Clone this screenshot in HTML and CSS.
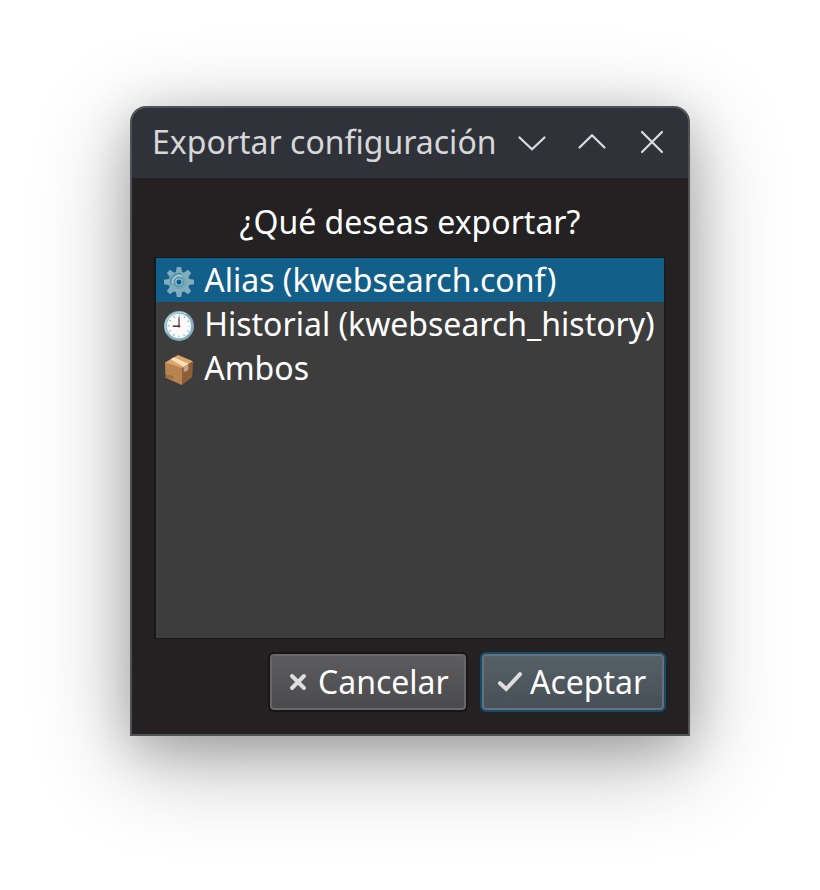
FILE: index.html
```html
<!DOCTYPE html>
<html lang="es">
<head>
<meta charset="utf-8">
<title>Exportar configuración</title>
<link rel="stylesheet" href="styles.css">
</head>
<body>
<main class="window">
  <header class="titlebar">
    <h1 class="title">Exportar configuración</h1>
    <div class="controls">
      <svg class="control" viewBox="0 0 36 36"><path d="M5.5 13.5 18 25.2 30.5 13.5"/></svg>
      <svg class="control" viewBox="0 0 36 36"><path d="M5.5 23.5 18 11.2 30.5 23.5"/></svg>
      <svg class="control" viewBox="0 0 36 36"><path d="M8 8 28 28M28 8 8 28"/></svg>
    </div>
  </header>
  <section class="content">
    <p class="question">¿Qué deseas exportar?</p>
    <ul class="list">
      <li class="row selected">
        <svg class="emoji" viewBox="0 0 30 30">
          <g fill="#82adbd">
            <g id="teeth">
              <path id="tooth" d="M11.8 6 12.8 0h4.4l1 6z"/>
              <use href="#tooth" transform="rotate(45 15 15)"/>
              <use href="#tooth" transform="rotate(90 15 15)"/>
              <use href="#tooth" transform="rotate(135 15 15)"/>
            </g>
            <use href="#teeth" transform="rotate(180 15 15)"/>
            <circle cx="15" cy="15" r="10.6"/>
          </g>
          <circle cx="15" cy="15" r="7.2" fill="#6fa5b8"/>
          <path d="M7.1 18A8.5 8.5 0 0 1 18 7" fill="none" stroke="#438da8" stroke-width="1.2"/>
          <path d="M9 16.5a6.2 6.2 0 0 1 9-7" fill="none" stroke="#a9cad5" stroke-width="1.3"/>
          <circle cx="15" cy="15" r="4.6" fill="#3b7f9c"/>
          <circle cx="15" cy="15" r="3.2" fill="#105f8a" stroke="#9cc3d0" stroke-width="1.3"/>
        </svg>
        <span>Alias (kwebsearch.conf)</span>
      </li>
      <li class="row">
        <svg class="emoji" viewBox="0 0 30 30">
          <circle cx="15" cy="15" r="15" fill="#82aebf"/>
          <path d="M3 22A14 14 0 0 1 22 3" fill="none" stroke="#a5d0df" stroke-width="1.5"/>
          <circle cx="15" cy="15" r="12.2" fill="#fafafa"/>
          <circle cx="15" cy="15" r="10.3" fill="none" stroke="#7ba5b5" stroke-width="1.8" stroke-dasharray="1 4.393" stroke-dashoffset=".5"/>
          <path d="M15 15.5V6.2" stroke="#5c4545" stroke-width="1.3"/>
          <path d="M15.5 15.2H8.8" stroke="#493033" stroke-width="1.5"/>
          <circle cx="15" cy="15.2" r="1.3" fill="#783638"/>
        </svg>
        <span>Historial (kwebsearch_history)</span>
      </li>
      <li class="row">
        <svg class="emoji" viewBox="0 0 30 30">
          <path d="M1 7.5 18 13v17L1.5 22.7z" fill="#b7834f"/>
          <path d="M18 13 29 6.5 28.3 22 18 30z" fill="#8f5e38"/>
          <path d="M1 7.5 14 0l15 6.3L18 13.2z" fill="#dda66b"/>
          <path d="M6.6 4.2 10 2.3 24.4 8.8 19.7 11.8z" fill="#fae0b7"/>
          <path d="m19.7 11.8 4.7-3v5.8L21.6 17l-1.9-.7z" fill="#c3a38b"/>
          <path d="M1 7.5 18 13" fill="none" stroke="#c99359" stroke-width=".7"/>
          <path d="M2.6 19.3v2.6l1.6.7v-2.4M6 23.2v-2.4M5.2 20.6l1.7.7M8 24v-2.4M7.3 21.4l1.6.7" fill="none" stroke="#765334" stroke-width=".6"/>
        </svg>
        <span>Ambos</span>
      </li>
    </ul>
    <div class="actions">
      <button class="button cancel">
        <svg class="icon" viewBox="0 0 32 32"><path d="M10 10 22 22M22 10 10 22"/></svg>
        <span>Cancelar</span>
      </button>
      <button class="button accept">
        <svg class="icon" viewBox="0 0 32 32"><path d="M6 17.2 12.2 23 26 8.2"/></svg>
        <span>Aceptar</span>
      </button>
    </div>
  </section>
</main>
</body>
</html>
```
FILE: styles.css
```css
* { box-sizing: border-box; }
body {
  margin: 0;
  height: 890px;
  padding: 106px 130px 0;
  overflow: hidden;
  background: #fff;
  font: 32px/44px "Noto Sans", sans-serif;
}
.window {
  width: 560px;
  height: 630px;
  border: 2px solid #505356;
  border-radius: 16px 16px 0 0;
  background: #232122;
  background-clip: padding-box;
  overflow: hidden;
  box-shadow: 0 24px 96px rgba(0, 0, 0, .3), 0 12px 48px rgba(0, 0, 0, .2);
}
.titlebar {
  display: flex;
  align-items: center;
  justify-content: space-between;
  height: 70px;
  padding: 0 18px 2px 20px;
  background: #2f3239;
  color: #d6d7d8;
}
.title {
  margin: 0;
  font: inherit;
  white-space: nowrap;
}
.controls { display: flex; gap: 24px; }
.control {
  width: 36px;
  height: 36px;
  fill: none;
  stroke: #dcddde;
  stroke-width: 2.2;
  stroke-linecap: round;
  stroke-linejoin: miter;
}
.content {
  display: flex;
  flex-direction: column;
  padding: 22px 22px 0;
  color: #fff;
}
.question { margin: 0 0 13px; text-align: center; }
.list {
  width: 511px;
  height: 382px;
  margin: 0;
  padding: 0;
  border: 1px solid #181818;
  border-width: 1px 1px 1px 2px;
  background: #3d3d3d;
  list-style: none;
}
.row {
  display: flex;
  align-items: center;
  height: 44px;
  padding-left: 8px;
  gap: 10.25px;
  white-space: nowrap;
}
.selected { background: #125f8a; }
.emoji {
  width: 30px;
  height: 30px;
  margin-top: 4px;
  flex: none;
}
.actions {
  display: flex;
  justify-content: flex-end;
  gap: 12px;
  margin: 13px 0 0;
}
.button {
  display: flex;
  align-items: center;
  height: 60px;
  padding: 0 0 0 12px;
  border: 2px solid #181617;
  border-radius: 6px;
  color: #fff;
  font: inherit;
}
.cancel {
  width: 200px;
  background: linear-gradient(#5d5c5e, #4a494b);
  box-shadow: inset 0 0 0 2px #68686a;
}
.accept {
  width: 186px;
  border-color: #124c6d;
  background: linear-gradient(#566167, #474f57);
  box-shadow: inset 0 0 0 2px #6a7076;
}
.icon {
  width: 32px;
  height: 32px;
  flex: none;
  margin-right: 4px;
  fill: none;
  stroke: #dedede;
  stroke-width: 4;
  stroke-linecap: round;
}
```
